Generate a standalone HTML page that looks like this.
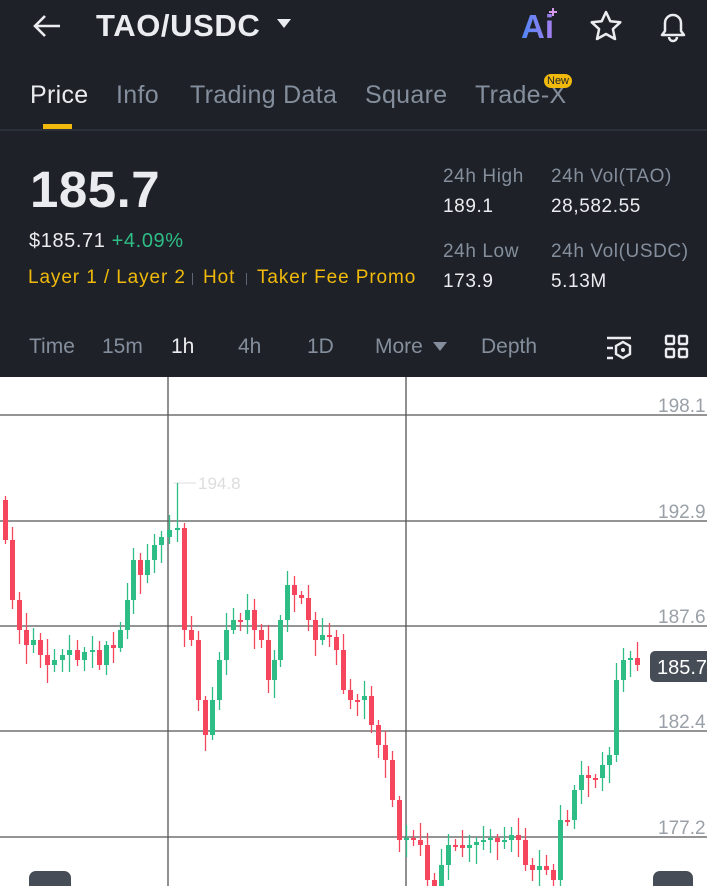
<!DOCTYPE html>
<html><head><meta charset="utf-8"><style>
*{margin:0;padding:0;box-sizing:border-box}
body{width:707px;height:886px;overflow:hidden;background:#1e2228;font-family:"Liberation Sans",sans-serif;color:#eaecef;position:relative}
.a{position:absolute;white-space:nowrap}
.tab{font-size:25px;color:#848e9c;top:81px;letter-spacing:0.3px}
.g{color:#848e9c;font-size:19px;letter-spacing:0.6px}
.w{color:#eaecef;font-size:19px;letter-spacing:0.6px}
.y{color:#f0b90b;font-size:19px;top:267px;letter-spacing:0.9px}
.tf{font-size:21px;color:#848e9c;top:335px}
.sep{position:absolute;top:273px;width:1px;height:12px;background:#5e6673}
</style></head><body>
<svg class="a" style="left:30px;top:12px" width="34" height="28" viewBox="0 0 34 28"><path d="M30 14H5M15 4L5 14l10 10" stroke="#eaecef" stroke-width="2.6" fill="none"/></svg>
<div class="a" style="left:96px;top:8px;font-size:31px;font-weight:bold;letter-spacing:0.6px">TAO/USDC</div>
<svg class="a" style="left:276px;top:18px" width="16" height="12"><path d="M1 1h14L8 10z" fill="#eaecef"/></svg>
<div class="a" style="left:521px;top:8px;font-size:33px;font-weight:bold;background:linear-gradient(90deg,#4f86f5,#a77ff0);-webkit-background-clip:text;color:transparent">Ai</div>
<svg class="a" style="left:549px;top:8px" width="8" height="8"><path d="M4 0v8M0 4h8" stroke="#d49ae8" stroke-width="2"/></svg>
<svg class="a" style="left:588px;top:9px" width="36" height="34" viewBox="0 0 36 34"><path d="M18 3l4.3 9.2 10 1.1-7.4 6.8 2.1 9.9L18 25l-9 5 2.1-9.9-7.4-6.8 10-1.1z" stroke="#eaecef" stroke-width="2.5" fill="none" stroke-linejoin="round"/></svg>
<svg class="a" style="left:655px;top:8px" width="36" height="36" viewBox="0 0 36 36"><path d="M7 27h22l-3-4V15a8 8 0 0 0-16 0v8z M14 29a4 4 0 0 0 8 0" stroke="#eaecef" stroke-width="2.5" fill="none" stroke-linejoin="round"/></svg>
<div class="a tab" style="left:30px;color:#eaecef">Price</div>
<div class="a tab" style="left:116px">Info</div>
<div class="a tab" style="left:190px">Trading Data</div>
<div class="a tab" style="left:365px">Square</div>
<div class="a tab" style="left:475px">Trade-X</div>
<div class="a" style="left:544px;top:74px;background:#f0b90b;color:#1e2228;font-size:11px;border-radius:8px;padding:1px 3px">New</div>
<div class="a" style="left:43px;top:124px;width:29px;height:5px;background:#f0b90b"></div>
<div class="a" style="left:0;top:129px;width:707px;height:2px;background:#2b3139"></div>
<div class="a" style="left:30px;top:160px;font-size:51px;font-weight:bold;letter-spacing:0.5px">185.7</div>
<div class="a w" style="left:29px;top:230px;font-size:20px">$185.71 <span style="color:#2ebd85">+4.09%</span></div>
<div class="a y" style="left:28px">Layer 1 / Layer 2</div>
<div class="sep" style="left:192px"></div>
<div class="a y" style="left:203px">Hot</div>
<div class="sep" style="left:246px"></div>
<div class="a y" style="left:257px">Taker Fee Promo</div>
<div class="a g" style="left:443px;top:166px">24h High</div>
<div class="a w" style="left:443px;top:196px">189.1</div>
<div class="a g" style="left:551px;top:166px">24h Vol(TAO)</div>
<div class="a w" style="left:551px;top:196px">28,582.55</div>
<div class="a g" style="left:443px;top:241px">24h Low</div>
<div class="a w" style="left:443px;top:271px">173.9</div>
<div class="a g" style="left:551px;top:241px">24h Vol(USDC)</div>
<div class="a w" style="left:551px;top:271px">5.13M</div>
<div class="a tf" style="left:29px">Time</div>
<div class="a tf" style="left:102px">15m</div>
<div class="a tf" style="left:171px;color:#eaecef">1h</div>
<div class="a tf" style="left:238px">4h</div>
<div class="a tf" style="left:307px">1D</div>
<div class="a tf" style="left:375px">More</div>
<svg class="a" style="left:433px;top:342px" width="14" height="10"><path d="M0 0h14L7 9z" fill="#848e9c"/></svg>
<div class="a tf" style="left:481px">Depth</div>
<svg class="a" style="left:605px;top:334px" width="30" height="28" viewBox="0 0 30 28"><path d="M2 4h24M2 14h6M2 24h6" stroke="#eaecef" stroke-width="2.4"/><path d="M18 8l7 4v8l-7 4-7-4v-8z" stroke="#eaecef" stroke-width="2.4" fill="none"/><circle cx="18" cy="16" r="2" fill="#eaecef"/></svg>
<svg class="a" style="left:664px;top:334px" width="26" height="26" viewBox="0 0 26 26" fill="none" stroke="#eaecef" stroke-width="2.4"><rect x="2" y="2" width="8" height="8" rx="1"/><rect x="15" y="2" width="8" height="8" rx="1"/><rect x="2" y="15" width="8" height="8" rx="1"/><rect x="15" y="15" width="8" height="8" rx="1"/></svg>
<svg id="ch" class="a" style="left:0;top:377px" width="707" height="509" viewBox="0 377 707 509">
<rect x="0" y="377" width="707" height="509" fill="#fff"/>
<g stroke="#555" stroke-width="1.3"><line x1="0" y1="415" x2="707" y2="415"/><line x1="0" y1="521" x2="707" y2="521"/><line x1="0" y1="626" x2="707" y2="626"/><line x1="0" y1="731" x2="707" y2="731"/><line x1="0" y1="837" x2="707" y2="837"/><line x1="168" y1="377" x2="168" y2="886"/><line x1="406" y1="377" x2="406" y2="886"/></g>
<g fill="#9aa0a8" font-size="19" font-family="Liberation Sans"><text x="658" y="412">198.1</text><text x="658" y="518">192.9</text><text x="658" y="623">187.6</text><text x="658" y="728">182.4</text><text x="658" y="834">177.2</text></g>
<line x1="174" y1="483" x2="196" y2="483" stroke="#ddd"/><text x="198" y="489" fill="#ddd" font-size="17" font-family="Liberation Sans">194.8</text>
<g id="cd"></g>
<rect x="650" y="651" width="62" height="31" rx="5" fill="#474d57"/><text x="657" y="674" fill="#fff" font-size="20" font-family="Liberation Sans">185.7</text>
<rect x="29" y="871" width="42" height="30" rx="7" fill="#474d57"/><rect x="653" y="871" width="40" height="30" rx="7" fill="#474d57"/>
</svg>
<script>
var pts=[[3,540],[10,600],[17,630],[24,645],[31,640],[38,655],[45,665],[52,660],[60,655],[67,650],[75,660],[82,652],[90,650],[97,665],[104,645],[111,648],[118,630],[125,600],[131,560],[138,575],[145,560],[152,545],[159,537],[167,530],[175,528],[182,630],[189,640],[196,700],[203,735],[210,700],[217,660],[224,630],[231,620],[238,620],[245,610],[252,630],[259,640],[266,680],[272,660],[278,620],[285,585],[292,595],[299,598],[306,620],[313,640],[320,635],[327,637],[334,650],[341,690],[348,700],[355,700],[362,696],[369,725],[376,745],[383,760],[390,800],[397,840],[404,838],[411,840],[418,845],[425,880],[432,890],[439,865],[446,845],[453,845],[460,848],[467,845],[474,842],[481,840],[488,838],[495,842],[502,840],[509,835],[516,840],[523,865],[530,870],[537,866],[544,870],[551,880],[558,820],[565,820],[572,790],[579,775],[586,778],[593,778],[600,765],[607,755],[614,680],[621,660],[628,658],[635,665]];
var s='',prev=pts[0][1]-40;
for(var i=0;i<pts.length;i++){var x=pts[i][0],c=pts[i][1],o=prev,up=c<o,col=up?'#2ebd85':'#f6465d';
var t=Math.min(o,c),b=Math.max(o,c);if(b-t<2){b=t+2}
var hw=t-4-((i*37)%14),lw=b+4+((i*53)%16);if(i==24)hw=483;if(i==91)hw=597;
s+='<line x1="'+(x+2.5)+'" y1="'+hw+'" x2="'+(x+2.5)+'" y2="'+lw+'" stroke="'+col+'" stroke-width="1.3"/>';
s+='<rect x="'+x+'" y="'+t+'" width="5" height="'+(b-t)+'" fill="'+col+'"/>';prev=c;}
document.getElementById('cd').innerHTML=s;
</script>
</body></html>
